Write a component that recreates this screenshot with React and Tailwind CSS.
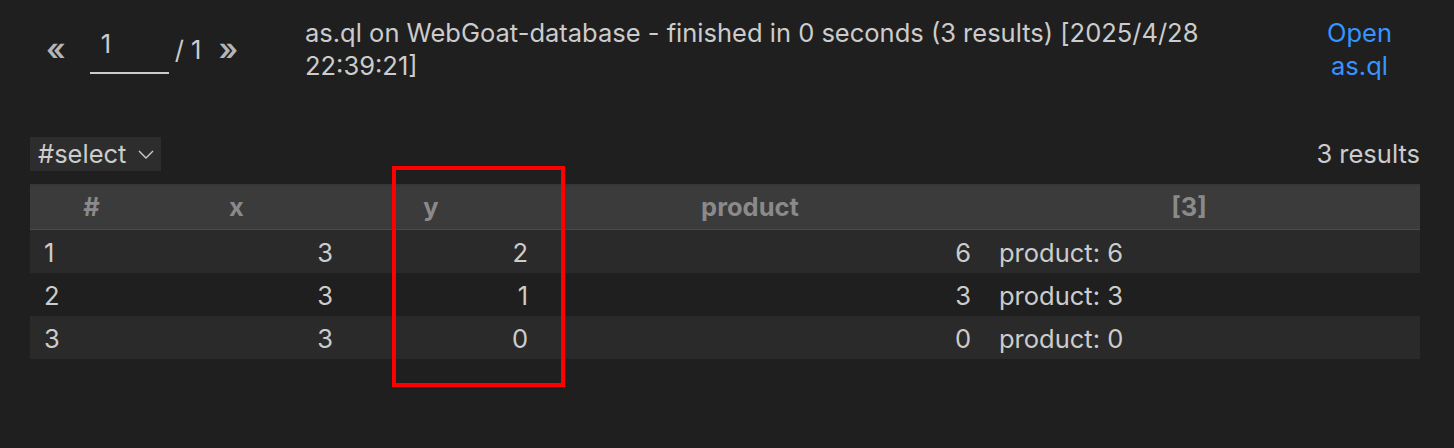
const rows = [
  { n: 1, x: 3, y: 2, product: 6 },
  { n: 2, x: 3, y: 1, product: 3 },
  { n: 3, x: 3, y: 0, product: 0 },
]

const cols = 'grid grid-cols-[123px_194px_195px_443px_435px]'

export default function App() {
  return (
    <div className="relative h-[448px] w-full overflow-hidden bg-[#1f1f1f] text-[25.5px] text-[#cccccc] [font-family:Inter,'Noto_Sans',sans-serif]">
      {/* top bar */}
      <div className="flex items-start pt-[16px]">
        <div className="flex w-[305px] shrink-0 items-start pl-[46px] pt-[13px]">
          <span className="mt-[4px] text-[31px] font-semibold leading-none text-[#b5b5b5]">«</span>
          <div className="ml-[24px] h-[45px] w-[79px] border-b-2 border-[#cccccc] pl-[11px] leading-[30px]">1</div>
          <span className="ml-[6px] mt-[3px] leading-[36px]">/ 1</span>
          <span className="ml-[17px] mt-[4px] text-[31px] font-semibold leading-none text-[#b5b5b5]">»</span>
        </div>
        <div className="w-[930px] leading-[33px]">
          as.ql on WebGoat-database - finished in 0 seconds (3 results) [2025/4/28 22:39:21]
        </div>
        <div className="flex-1 pl-[30px] text-center leading-[33px] text-[#3794ff]">
          <div className="mx-auto w-[80px]">Open as.ql</div>
        </div>
      </div>

      {/* result set selector */}
      <div className="mt-[55px] flex h-[34px] items-center justify-between pl-[30px] pr-[34px] leading-[34px]">
        <div className="flex h-[34px] items-center gap-[12px] bg-[#2d2d2d] pl-[8px] pr-[7px]">
          <span>#select</span>
          <svg width="16" height="9" viewBox="0 0 16 9" fill="none" stroke="#cccccc" strokeWidth="1.4">
            <path d="M1 1l7 7 7-7" />
          </svg>
        </div>
        <span>3 results</span>
      </div>

      {/* table */}
      <div className="ml-[30px] mt-[13px] w-[1390px]">
        <div className={`${cols} h-[46px] items-center border-t-2 border-b border-t-[#33383c] border-b-[#444c52] bg-[#3b3b3b] font-bold text-[#8a8a8a]`}>
          <div className="text-center">#</div>
          <div className="pr-[27px] text-center">x</div>
          <div className="pr-[27px] text-center">y</div>
          <div className="pr-[27px] text-center">product</div>
          <div className="pr-[27px] text-center">[3]</div>
        </div>
        {rows.map((r, i) => (
          <div key={r.n} className={`${cols} h-[43px] items-center pt-[3px] ${i % 2 === 0 ? 'bg-[#2a2a2a]' : 'bg-[#1f1f1f]'}`}>
            <div className="pl-[14px]">{r.n}</div>
            <div className="pr-[14px] text-right">{r.x}</div>
            <div className="pr-[14px] text-right">{r.y}</div>
            <div className="pr-[14px] text-right">{r.product}</div>
            <div className="pl-[14px]">product: {r.product}</div>
          </div>
        ))}
      </div>

      {/* highlight annotation */}
      <div className="pointer-events-none absolute left-[392px] top-[166px] h-[221px] w-[173px] border-4 border-[#ff0000]" />
    </div>
  )
}
